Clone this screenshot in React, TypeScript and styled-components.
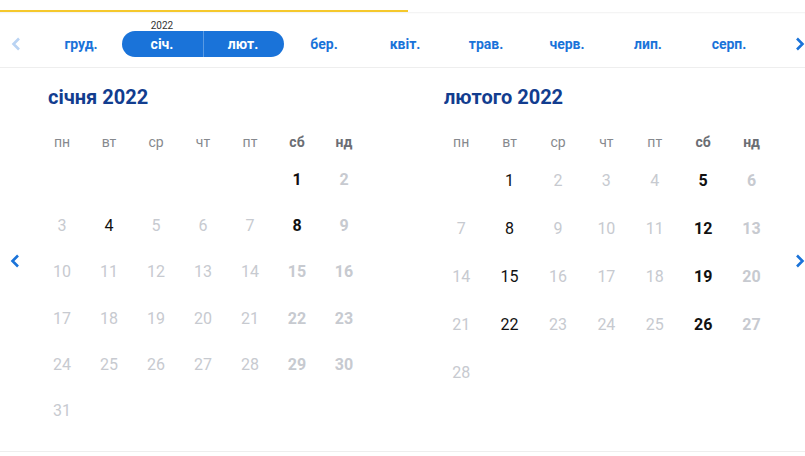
import React from "react";
import styled, { createGlobalStyle, css } from "styled-components";

const GlobalStyle = createGlobalStyle`
  body {
    margin: 0;
    background: #fff;
    font-family: Roboto, "Noto Sans", "Liberation Sans", sans-serif;
  }
`;

const palette = {
  blue: "#1a73d9",
  blueLight: "#b9d3f3",
  navy: "#123d8f",
  yellow: "#f5c82c",
  line: "#eeeeee",
  muted: "#c7cad0",
};

const WEEKDAYS = ["пн", "вт", "ср", "чт", "пт", "сб", "нд"];

const MONTHS = [
  { label: "груд." },
  { label: "січ.", selected: true, year: "2022" },
  { label: "лют.", selected: true },
  { label: "бер." },
  { label: "квіт." },
  { label: "трав." },
  { label: "черв." },
  { label: "лип." },
  { label: "серп." },
];

interface MonthData {
  title: string;
  offset: number;
  days: number;
  active: number[];
  cellW: number;
  cellH: number;
  inset: number;
}

const CALENDARS: MonthData[] = [
  { title: "січня 2022", offset: 5, days: 31, active: [1, 4, 8], cellW: 47, cellH: 46.3, inset: 9.5 },
  {
    title: "лютого 2022",
    offset: 1,
    days: 28,
    active: [1, 5, 8, 12, 15, 19, 22, 26],
    cellW: 48.4,
    cellH: 48,
    inset: 7,
  },
];

function Chevron({ dir, color }: { dir: "left" | "right"; color: string }) {
  const d = dir === "left" ? "M8 1.5 L2.5 7 L8 12.5" : "M2 1.5 L7.5 7 L2 12.5";
  return (
    <svg width="10" height="14" viewBox="0 0 10 14">
      <path d={d} fill="none" stroke={color} strokeWidth="2.6" />
    </svg>
  );
}

function Month({ data }: { data: MonthData }) {
  const cells: React.ReactNode[] = [];
  for (let i = 0; i < data.offset; i++) cells.push(<Day key={"e" + i} />);
  for (let d = 1; d <= data.days; d++) {
    const wd = (data.offset + d - 1) % 7;
    cells.push(
      <Day key={d} $weekend={wd >= 5} $active={data.active.includes(d)}>
        {d}
      </Day>
    );
  }

  return (
    <MonthPanel $cellW={data.cellW} $cellH={data.cellH}>
      <MonthTitle $inset={data.inset}>{data.title}</MonthTitle>
      <Grid>
        {WEEKDAYS.map((w, i) => (
          <WeekDay key={w} $weekend={i >= 5}>
            {w}
          </WeekDay>
        ))}
      </Grid>
      <Grid>{cells}</Grid>
    </MonthPanel>
  );
}

export default function App() {
  return (
    <Page>
      <GlobalStyle />
      <Progress>
        <ProgressFill style={{ width: "408px" }} />
      </Progress>
      <MonthStrip>
        <StripArrow>
          <Chevron dir="left" color={palette.blueLight} />
        </StripArrow>
        <MonthList>
          {MONTHS.map((m, i) => {
            const prev = MONTHS[i - 1];
            const next = MONTHS[i + 1];
            return (
              <MonthItem
                key={m.label}
                $selected={!!m.selected}
                $start={!!m.selected && !prev?.selected}
                $end={!!m.selected && !next?.selected}
              >
                {m.year && <YearTag>{m.year}</YearTag>}
                {m.label}
              </MonthItem>
            );
          })}
        </MonthList>
        <StripArrow $right>
          <Chevron dir="right" color={palette.blue} />
        </StripArrow>
      </MonthStrip>
      <Calendars>
        <SideArrow>
          <Chevron dir="left" color={palette.blue} />
        </SideArrow>
        <Month data={CALENDARS[0]} />
        <MonthGap />
        <Month data={CALENDARS[1]} />
        <SideArrow $right>
          <Chevron dir="right" color={palette.blue} />
        </SideArrow>
      </Calendars>
    </Page>
  );
}

const Page = styled.div`
  width: 805px;
  height: 456px;
  background: #fff;
  padding-top: 10px;
  box-sizing: border-box;
`;

const Progress = styled.div`
  height: 2px;
  background: #fff;
`;

const ProgressFill = styled.div`
  height: 100%;
  background: ${palette.yellow};
`;

const MonthStrip = styled.div`
  display: flex;
  align-items: center;
  height: 56px;
  padding: 19px 0 10px;
  box-sizing: border-box;
  border-bottom: 1px solid ${palette.line};
  box-shadow: inset 0 2px 2px -1px rgba(0, 0, 0, 0.06);
`;

const StripArrow = styled.div<{ $right?: boolean }>`
  display: flex;
  align-items: center;
  height: 26px;
  ${(p) =>
    p.$right
      ? css`
          flex: 1;
          justify-content: flex-end;
        `
      : css`
          width: 40.5px;
          padding-left: 11px;
          box-sizing: border-box;
        `}
`;

const MonthList = styled.div`
  display: grid;
  grid-template-columns: repeat(9, 81px);
`;

const MonthItem = styled.div<{ $selected: boolean; $start: boolean; $end: boolean }>`
  position: relative;
  height: 26px;
  display: flex;
  align-items: center;
  justify-content: center;
  font-size: 14px;
  font-weight: 700;
  color: ${palette.blue};
  ${(p) =>
    p.$selected &&
    css`
      background: ${palette.blue};
      color: #fff;
    `}
  ${(p) =>
    p.$start &&
    css`
      border-radius: 13px 0 0 13px;
    `}
  ${(p) =>
    p.$end &&
    css`
      border-radius: 0 13px 13px 0;
    `}
  ${(p) =>
    p.$selected &&
    !p.$start &&
    css`
      box-shadow: inset 1px 0 0 rgba(255, 255, 255, 0.28);
    `}
`;

const YearTag = styled.span`
  position: absolute;
  top: -11px;
  left: 0;
  right: 0;
  text-align: center;
  font-size: 10px;
  line-height: 12px;
  font-weight: 400;
  color: #333;
`;

const Calendars = styled.div`
  display: flex;
  height: 384px;
  box-sizing: border-box;
  border-bottom: 1px solid ${palette.line};
`;

const SideArrow = styled.div<{ $right?: boolean }>`
  display: flex;
  align-items: center;
  padding-top: 2px;
  ${(p) =>
    p.$right
      ? css`
          flex: 1;
          justify-content: flex-end;
        `
      : css`
          width: 38.5px;
          padding-left: 10px;
          box-sizing: border-box;
        `}
`;

const MonthGap = styled.div`
  width: 69.5px;
`;

const MonthPanel = styled.div<{ $cellW: number; $cellH: number }>`
  --cell-w: ${(p) => p.$cellW}px;
  --cell-h: ${(p) => p.$cellH}px;
  width: calc(var(--cell-w) * 7);
  padding-top: 16px;
`;

const MonthTitle = styled.div<{ $inset: number }>`
  padding-left: ${(p) => p.$inset}px;
  font-size: 20px;
  line-height: 26px;
  font-weight: 700;
  color: ${palette.navy};
  margin-bottom: 18px;
`;

const Grid = styled.div`
  display: grid;
  grid-template-columns: repeat(7, var(--cell-w));
`;

const WeekDay = styled.div<{ $weekend: boolean }>`
  height: 28px;
  display: flex;
  align-items: center;
  justify-content: center;
  font-size: 14px;
  color: ${(p) => (p.$weekend ? "#6b6e74" : "#86898e")};
  font-weight: ${(p) => (p.$weekend ? 700 : 400)};
`;

const Day = styled.div<{ $weekend?: boolean; $active?: boolean }>`
  height: var(--cell-h);
  display: flex;
  align-items: center;
  justify-content: center;
  font-size: 16px;
  font-weight: ${(p) => (p.$weekend ? 700 : 400)};
  color: ${(p) => (p.$active ? "#111" : palette.muted)};
`;
